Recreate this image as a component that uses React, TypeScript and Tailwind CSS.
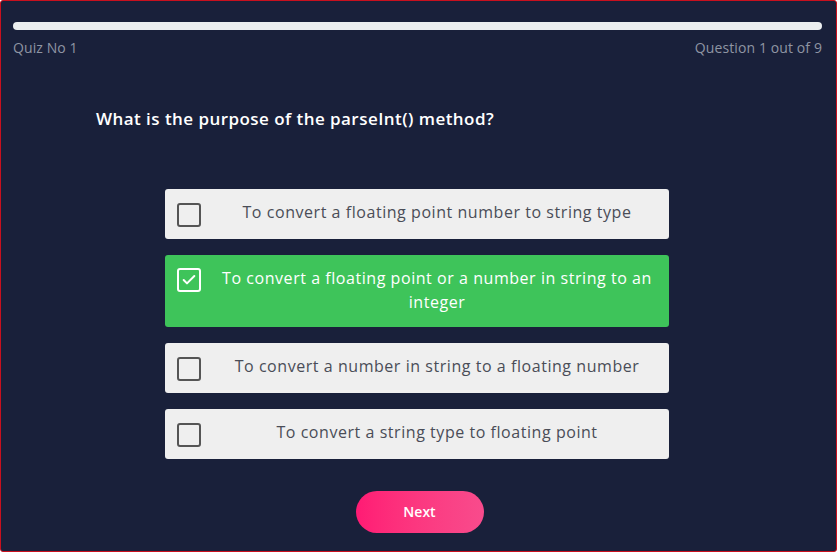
import { Check } from "lucide-react";

const options = [
  "To convert a floating point number to string type",
  "To convert a floating point or a number in string to an integer",
  "To convert a number in string to a floating number",
  "To convert a string type to floating point",
];

const selected = 1;

export default function App() {
  return (
    <div
      className="h-[552px] w-[837px] overflow-hidden rounded-[3px] border border-[#c8101e] bg-[#19203a]"
      style={{ fontFamily: "'Open Sans', 'Liberation Sans', sans-serif" }}
    >
      <div className="pl-3 pr-[14px] pt-[21px]">
        {/* progress */}
        <div className="h-[8px] w-full rounded-full bg-[#eceff0]" />
        <div className="mt-[7px] flex items-center justify-between text-[14px] tracking-[0.1px] text-[#8f95a3]">
          <span>Quiz No 1</span>
          <span>Question 1 out of 9</span>
        </div>
      </div>

      <h1 className="mt-[48px] pl-[95px] text-[17px] font-semibold tracking-[0.45px] text-white">
        What is the purpose of the parseInt() method?
      </h1>

      <div className="ml-[164px] mt-[57px] flex w-[504px] flex-col gap-4">
        {options.map((opt, i) => {
          const active = i === selected;
          return (
            <div
              key={opt}
              className={
                active
                  ? "flex min-h-[50px] items-start gap-4 rounded-[3px] bg-[#3ec45a] px-3 py-3 text-white"
                  : "flex min-h-[50px] items-start gap-4 rounded-[3px] bg-[#efefef] px-3 py-3 text-[#4a4d57]"
              }
            >
              <div
                className={
                  active
                    ? "mt-[1px] flex h-6 w-6 shrink-0 items-center justify-center rounded-[3px] border-2 border-white"
                    : "mt-[2px] h-6 w-6 shrink-0 rounded-[3px] border-2 border-[#555555]"
                }
              >
                {active && <Check className="h-4 w-4 text-white" strokeWidth={3} />}
              </div>
              <span className="flex-1 -translate-y-[1px] text-center text-[16px] leading-6 tracking-[0.55px]">
                {opt}
              </span>
            </div>
          );
        })}
      </div>

      <div className="mt-8 flex justify-center pl-[2px]">
        <button className="h-[42px] w-[128px] rounded-full bg-gradient-to-r from-[#ff1a74] to-[#f84b8c] text-[14px] font-semibold text-white">
          Next
        </button>
      </div>
    </div>
  );
}
